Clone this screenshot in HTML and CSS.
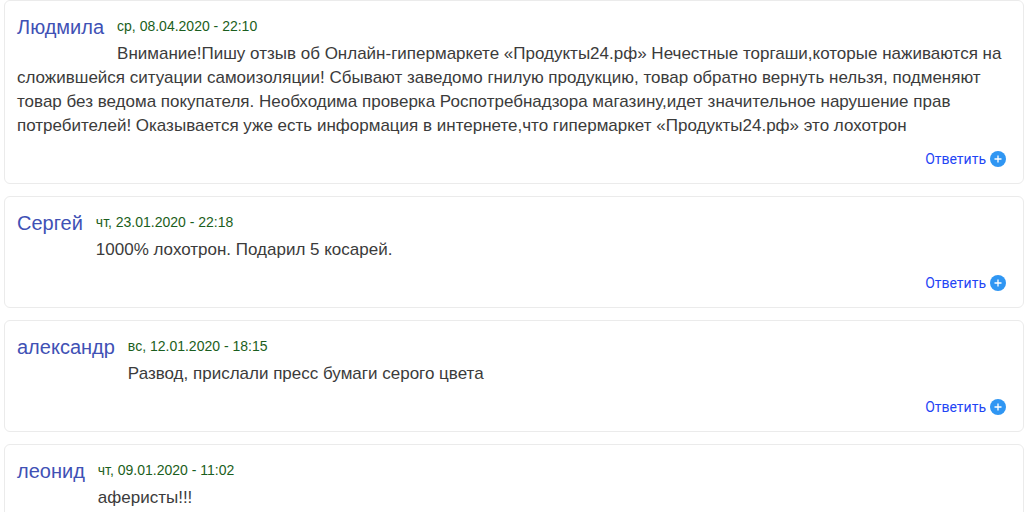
FILE: index.html
```
<!DOCTYPE html>
<html lang="ru">
<head>
  <meta charset="UTF-8">
  <meta name="viewport" content="width=device-width, initial-scale=1.0">
  <title>Отзывы</title>
  <link rel="stylesheet" href="styles.css">
</head>
<body>
  <main class="comments">
    <article class="comment">
      <h3 class="author">Людмила</h3>
      <time class="date" datetime="2020-04-08T22:10">ср, 08.04.2020 - 22:10</time>
      <p class="text">Внимание!Пишу отзыв об Онлайн-гипермаркете «Продукты24.рф» Нечестные торгаши,которые наживаются на сложившейся ситуации самоизоляции! Сбывают заведомо гнилую продукцию, товар обратно вернуть нельзя, подменяют товар без ведома покупателя. Необходима проверка Роспотребнадзора магазину,идет значительное нарушение прав потребителей! Оказывается уже есть информация в интернете,что гипермаркет «Продукты24.рф» это лохотрон</p>
      <div class="links">
        <a class="reply" href="#">Ответить
          <svg class="plus" viewBox="0 0 16 16" aria-hidden="true"><circle cx="8" cy="8" r="8"/><path d="M8 4.5v7M4.5 8h7"/></svg>
        </a>
      </div>
    </article>

    <article class="comment">
      <h3 class="author">Сергей</h3>
      <time class="date" datetime="2020-01-23T22:18">чт, 23.01.2020 - 22:18</time>
      <p class="text">1000% лохотрон. Подарил 5 косарей.</p>
      <div class="links">
        <a class="reply" href="#">Ответить
          <svg class="plus" viewBox="0 0 16 16" aria-hidden="true"><circle cx="8" cy="8" r="8"/><path d="M8 4.5v7M4.5 8h7"/></svg>
        </a>
      </div>
    </article>

    <article class="comment">
      <h3 class="author">александр</h3>
      <time class="date" datetime="2020-01-12T18:15">вс, 12.01.2020 - 18:15</time>
      <p class="text">Развод, прислали пресс бумаги серого цвета</p>
      <div class="links">
        <a class="reply" href="#">Ответить
          <svg class="plus" viewBox="0 0 16 16" aria-hidden="true"><circle cx="8" cy="8" r="8"/><path d="M8 4.5v7M4.5 8h7"/></svg>
        </a>
      </div>
    </article>

    <article class="comment">
      <h3 class="author">леонид</h3>
      <time class="date" datetime="2020-01-09T11:02">чт, 09.01.2020 - 11:02</time>
      <p class="text">аферисты!!!</p>
      <div class="links">
        <a class="reply" href="#">Ответить
          <svg class="plus" viewBox="0 0 16 16" aria-hidden="true"><circle cx="8" cy="8" r="8"/><path d="M8 4.5v7M4.5 8h7"/></svg>
        </a>
      </div>
    </article>
  </main>
</body>
</html>
```
FILE: styles.css
```
body {
  margin: 0;
  background: #fff;
  color: #3b3b3b;
  font-family: "Liberation Sans", Arial, sans-serif;
  font-size: 17px;
  line-height: 24px;
}
.comments {
  margin-left: 4px;
}
.comment {
  margin-bottom: 12px;
  padding: 12px;
  border: 1px solid #ebebeb;
  border-radius: 6px;
}
/* имя слева, первая строка отзыва обтекает его */
.author {
  float: left;
  margin: 0 13px 0 0;
  padding-bottom: 4px;
  color: #3f51b5;
  font-size: 20px;
  font-weight: normal;
  line-height: 28px;
}
.date {
  display: block;
  color: #1b5e20;
  font-size: 14px;
  line-height: 26px;
}
.text {
  margin: 3px 0 0;
}
.links {
  display: flex;
  justify-content: flex-end;
  margin-top: 9px;
  padding-right: 5px;
}
.reply {
  display: flex;
  align-items: center;
  gap: 4px;
  color: #1f45f5;
  font-family: Roboto, sans-serif;
  font-size: 14px;
  text-decoration: none;
}
.reply:hover {
  text-decoration: underline;
}
.plus {
  width: 16px;
  height: 16px;
  fill: #2f96f3;
  stroke: none;
}
.plus path {
  stroke: #fff;
  stroke-width: 1.3;
}
@media (max-width: 600px) {
  .comments {
    margin-right: 4px;
  }
}
```
